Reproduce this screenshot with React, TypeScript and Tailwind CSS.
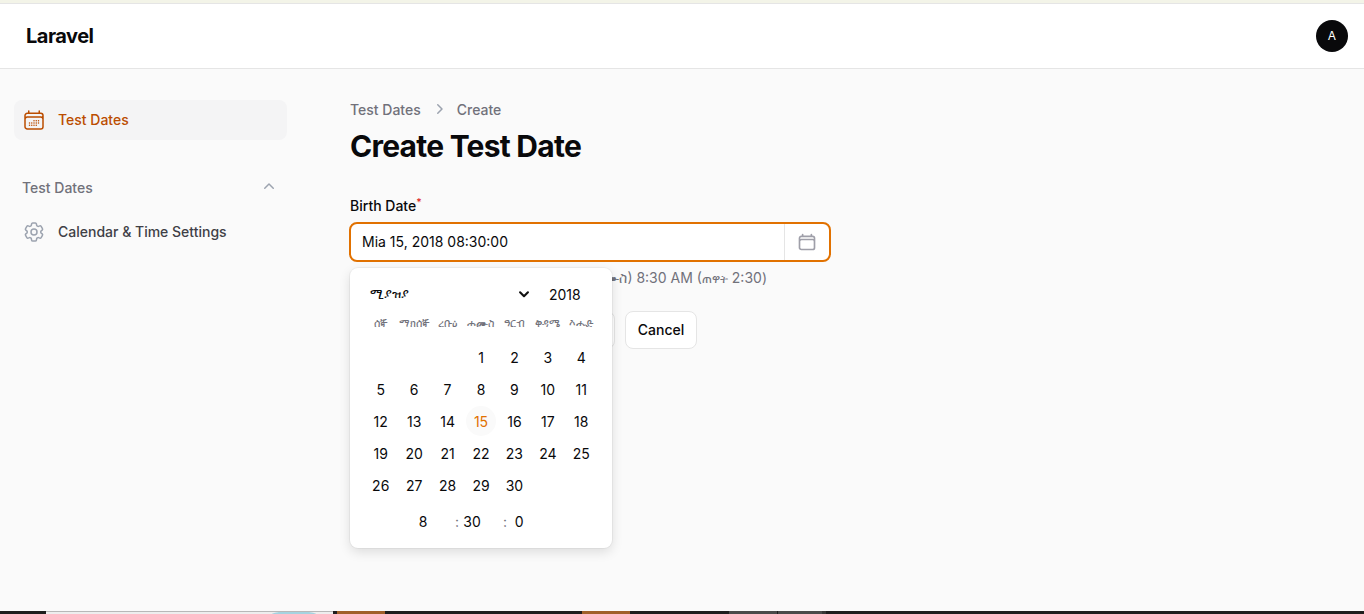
import React from "react";

const days = ["ሰኞ", "ማክሰኞ", "ረቡዕ", "ሐሙስ", "ዓርብ", "ቅዳሜ", "እሑድ"];
const cells: (number | null)[] = [null, null, null, ...Array.from({ length: 30 }, (_, i) => i + 1)];

function CalIcon() {
  return (
    <svg width="24" height="24" viewBox="0 0 24 24" fill="none" stroke="#bb4d00" strokeWidth="1.5" strokeLinecap="round" strokeLinejoin="round">
      <path d="M6.75 3v2.25M17.25 3v2.25M3 18.75V7.5a2.25 2.25 0 0 1 2.25-2.25h13.5A2.25 2.25 0 0 1 21 7.5v11.25m-18 0A2.25 2.25 0 0 0 5.25 21h13.5A2.25 2.25 0 0 0 21 18.75m-18 0v-7.5A2.25 2.25 0 0 1 5.25 9h13.5A2.25 2.25 0 0 1 21 11.25v7.5m-9-6h.008v.008H12v-.008ZM12 15h.008v.008H12V15Zm0 2.25h.008v.008H12v-.008ZM9.75 15h.008v.008H9.75V15Zm0 2.25h.008v.008H9.75v-.008ZM7.5 15h.008v.008H7.5V15Zm0 2.25h.008v.008H7.5v-.008Zm6.75-4.5h.008v.008h-.008v-.008Zm0 2.25h.008v.008h-.008V15Zm0 2.25h.008v.008h-.008v-.008Zm2.25-4.5h.008v.008H16.5v-.008Zm0 2.25h.008v.008H16.5V15Z" />
    </svg>
  );
}

function Gear() {
  return (
    <svg width="24" height="24" viewBox="0 0 24 24" fill="none" stroke="#9ca3af" strokeWidth="1.5" strokeLinecap="round" strokeLinejoin="round">
      <path d="M9.594 3.94c.09-.542.56-.94 1.11-.94h2.593c.55 0 1.02.398 1.11.94l.213 1.281c.063.374.313.686.645.87.074.04.147.083.22.127.325.196.72.257 1.075.124l1.217-.456a1.125 1.125 0 0 1 1.37.49l1.296 2.247a1.125 1.125 0 0 1-.26 1.431l-1.003.827c-.293.241-.438.613-.43.992a7.723 7.723 0 0 1 0 .255c-.008.378.137.75.43.991l1.004.827c.424.35.534.955.26 1.43l-1.298 2.247a1.125 1.125 0 0 1-1.369.491l-1.217-.456c-.355-.133-.75-.072-1.076.124a6.47 6.47 0 0 1-.22.128c-.331.183-.581.495-.644.869l-.213 1.281c-.09.543-.56.94-1.11.94h-2.594c-.55 0-1.019-.398-1.11-.94l-.213-1.281c-.062-.374-.312-.686-.644-.87a6.52 6.52 0 0 1-.22-.127c-.325-.196-.72-.257-1.076-.124l-1.217.456a1.125 1.125 0 0 1-1.369-.49l-1.297-2.247a1.125 1.125 0 0 1 .26-1.431l1.004-.827c.292-.24.437-.613.43-.991a6.932 6.932 0 0 1 0-.255c.007-.38-.138-.751-.43-.992l-1.004-.827a1.125 1.125 0 0 1-.26-1.43l1.297-2.247a1.125 1.125 0 0 1 1.37-.491l1.216.456c.356.133.751.072 1.076-.124.072-.044.146-.086.22-.128.332-.183.582-.495.644-.869l.214-1.28Z" />
      <path d="M15 12a3 3 0 1 1-6 0 3 3 0 0 1 6 0Z" />
    </svg>
  );
}

export default function App() {
  return (
    <div className="h-[614px] w-[1364px] overflow-hidden flex flex-col bg-[#fafafa] font-['Inter',sans-serif] text-[14px] text-[#09090b]">
      <div className="h-[3px] bg-[#f3f4e8] shrink-0" />
      <header className="h-[66px] shrink-0 bg-white border-y border-[#e5e5e5] flex items-center justify-between pl-[26px] pr-4">
        <span className="text-[20px] font-bold tracking-tight leading-5">Laravel</span>
        <span className="w-8 h-8 rounded-full bg-[#09090b] text-white text-[12px] font-normal flex items-center justify-center">A</span>
      </header>

      <div className="flex-1 flex min-h-0">
        <aside className="w-[350px] shrink-0 pl-[14px] pt-[31px]">
          <div className="w-[273px] h-10 rounded-lg bg-[#f4f4f5] flex items-center gap-3 px-2 text-[#bb4d00] font-medium">
            <CalIcon />
            <span className="mb-[2px]">Test Dates</span>
          </div>
          <div className="w-[273px] mt-[38px] h-5 flex items-center justify-between pl-2 pr-[8px] text-[#71717a] font-medium">
            <span className="mb-[2px]">Test Dates</span>
            <svg width="20" height="20" viewBox="0 0 20 20" fill="#9ca3af" className="mb-[2px]">
              <path fillRule="evenodd" clipRule="evenodd" d="M9.47 6.47a.75.75 0 0 1 1.06 0l4.25 4.25a.75.75 0 1 1-1.06 1.06L10 8.06l-3.72 3.72a.75.75 0 0 1-1.06-1.06l4.25-4.25Z" />
            </svg>
          </div>
          <div className="w-[273px] mt-[14px] h-10 flex items-center gap-3 px-2 text-[#3f3f46] font-medium">
            <Gear />
            <span className="mb-[2px]">Calendar &amp; Time Settings</span>
          </div>
        </aside>

        <main className="flex-1 pt-[30px]">
          <nav className="h-5 flex items-center gap-[9px] text-[#71717a] font-medium">
            <span>Test Dates</span>
            <svg width="20" height="20" viewBox="0 0 20 20" fill="#9ca3af" className="-mx-[1px]">
              <path fillRule="evenodd" clipRule="evenodd" d="M8.22 5.22a.75.75 0 0 1 1.06 0l4.25 4.25a.75.75 0 0 1 0 1.06l-4.25 4.25a.75.75 0 0 1-1.06-1.06L11.94 10 8.22 6.28a.75.75 0 0 1 0-1.06Z" />
            </svg>
            <span>Create</span>
          </nav>
          <h1 className="mt-[9px] text-[30px] leading-9 font-bold tracking-tight">Create Test Date</h1>

          <div className="mt-[30px] w-[480px] relative">
            <div className="h-6 leading-6 font-medium">
              Birth Date<sup className="text-[#dc2626] font-medium">*</sup>
            </div>
            <div className="mt-[4px] -mx-px h-10 rounded-lg bg-white border-2 border-[#e17100] flex items-center">
              <div className="flex-1 pl-[11px] text-[14px] mb-[1px]">Mia 15, 2018 08:30:00</div>
              <div className="w-[45px] h-full border-l border-[#e5e5e5] flex items-center justify-center">
                <svg width="20" height="20" viewBox="0 0 24 24" fill="none" stroke="#9f9fa9" strokeWidth="2" strokeLinecap="round" strokeLinejoin="round">
                  <path d="M6.75 3v2.25M17.25 3v2.25M3 18.75V7.5a2.25 2.25 0 0 1 2.25-2.25h13.5A2.25 2.25 0 0 1 21 7.5v11.25m-18 0A2.25 2.25 0 0 0 5.25 21h13.5A2.25 2.25 0 0 0 21 18.75m-18 0v-7.5A2.25 2.25 0 0 1 5.25 9h13.5A2.25 2.25 0 0 1 21 11.25v7.5" />
                </svg>
              </div>
            </div>
            <p className="mt-[6px] h-5 leading-5 w-[417px] text-right whitespace-nowrap text-[#71717a]">ሚያዝያ 15 ቀን 2018 ዓ.ም (ሐሙስ) 8:30 AM (<span className="text-[12px]">ጠዋት</span> 2:30)</p>
            <div className="mt-[23px] flex gap-[10px]">
              <button className="w-[265px] h-[38px] rounded-lg bg-white border border-[#e5e5e5]" />
              <button className="w-[72px] h-[38px] pb-[2px] rounded-lg bg-white border border-[#e5e5e5] font-medium text-[14px]">Cancel</button>
            </div>

            <div className="absolute left-0 top-[74px] w-[262px] h-[280px] rounded-lg bg-white shadow-[0_4px_12px_rgba(0,0,0,0.12),0_0_0_1px_rgba(0,0,0,0.04)] px-[14px] pt-[16px]">
              <div className="h-5 flex items-center pl-[6px] pr-[9px]">
                <span className="flex-1 text-[12.5px]">ሚያዝያ</span>
                <svg width="14" height="14" viewBox="0 0 16 16" fill="none" stroke="#111" strokeWidth="2.4" strokeLinecap="round" strokeLinejoin="round" className="mr-[18px]">
                  <path d="M3.5 6l4.5 4.5L12.5 6" />
                </svg>
                <span className="w-[40px] text-[14px]">2018</span>
              </div>
              <div className="mt-[9px] grid grid-cols-7 h-5 items-center">
                {days.map((d) => (
                  <span key={d} className="text-center text-[11px] font-medium text-[#71717a] whitespace-nowrap">{d}</span>
                ))}
              </div>
              <div className="mt-[8px] grid grid-cols-7 auto-rows-[32px] items-center justify-items-center">
                {cells.map((c, i) => (
                  <span key={i} className={c === 15 ? "w-[30px] h-[30px] rounded-full bg-[#fafafa] text-[#e17100] flex items-center justify-center" : "flex items-center justify-center"}>
                    {c}
                  </span>
                ))}
              </div>
              <div className="mt-[10px] h-5 flex items-center">
                <span className="ml-[44px] w-[30px] text-center">8</span>
                <span className="text-[#71717a] ml-[17px]">:</span>
                <span className="ml-[2px] w-[22px] text-center">30</span>
                <span className="text-[#71717a] ml-[20px]">:</span>
                <span className="w-[24px] text-center">0</span>
              </div>
            </div>
          </div>
        </main>
      </div>

      <div className="h-[3px] shrink-0 bg-[#1e1e1e] flex">
        <div className="ml-[46px] w-[287px] bg-[#eeeeee] border-t border-[#b8b8b8] relative overflow-hidden">
          <div className="absolute left-[225px] -top-px w-[46px] h-[8px] rounded-[50%] bg-[#a5d3e0]" />
        </div>
        <div className="ml-[4px] w-[48px] bg-[#a0602a]" />
        <div className="ml-[197px] w-[48px] bg-[#a0602a]" />
        <div className="ml-[99px] w-[48px] bg-[#4a4a4a]" />
        <div className="ml-[1px] w-[44px] bg-[#4a4a4a]" />
        <div className="w-[4px] bg-[#363636]" />
      </div>
    </div>
  );
}
